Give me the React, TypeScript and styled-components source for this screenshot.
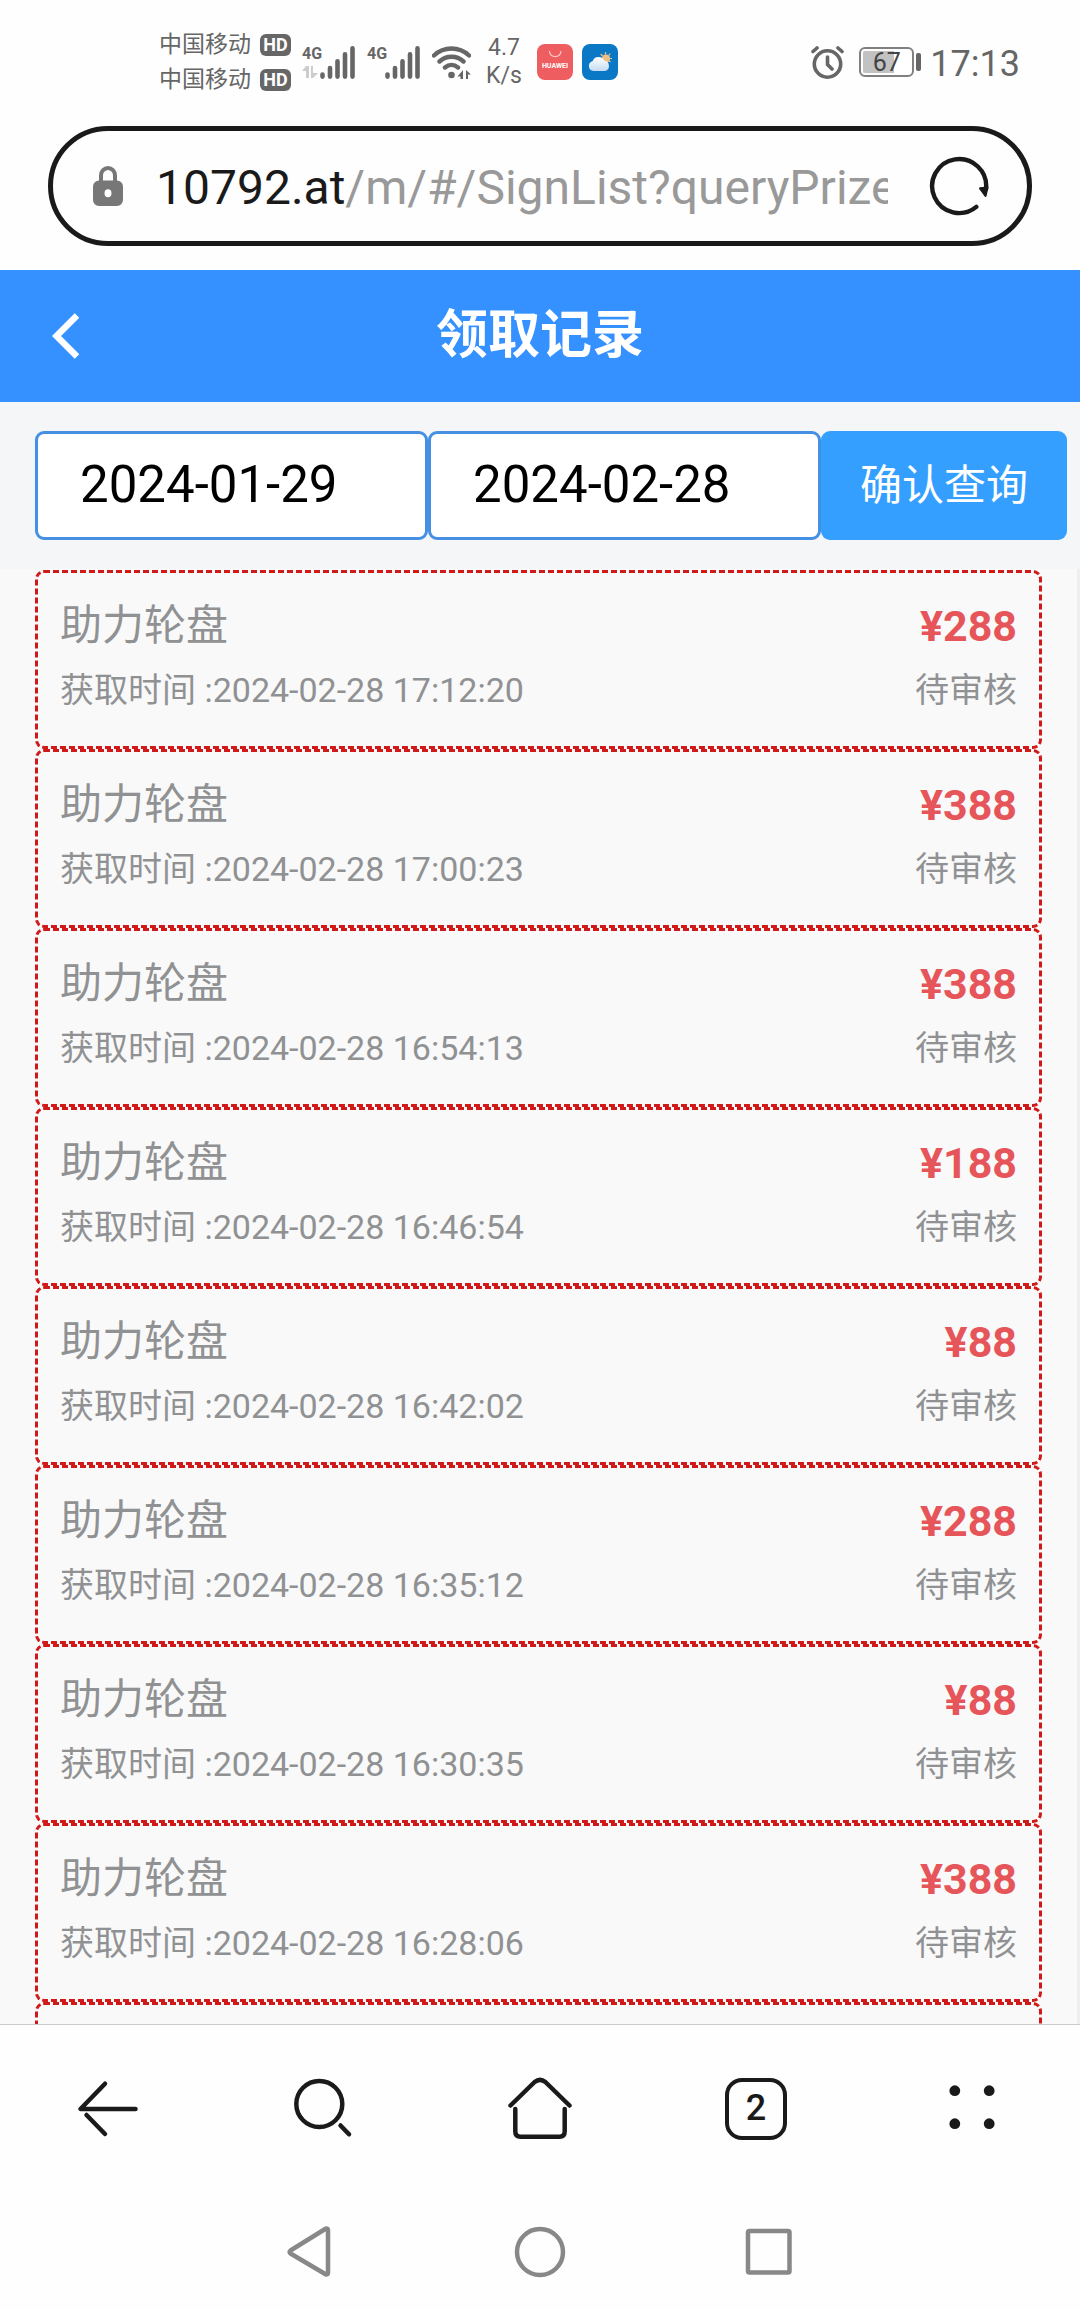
import React, { useState } from "react";
import styled, { createGlobalStyle } from "styled-components";

const ink = "#1a1a1a";
const statusGrey = "#666666";
const muted = "#909193";

const GlobalStyle = createGlobalStyle`
  * { box-sizing: border-box; }
  body {
    margin: 0;
    background: #ffffff;
    font-family: Roboto, "Noto Sans CJK SC", sans-serif;
  }
  button, input {
    font-family: inherit;
    margin: 0;
  }
  button {
    border: 0;
    padding: 0;
    background: none;
    color: inherit;
    cursor: pointer;
  }
  svg { display: block; flex: none; }
`;

const Screen = styled.div`
  display: flex;
  flex-direction: column;
  height: 100vh;
  background: #fefefe;
`;

/* ---------- phone status bar ---------- */

const StatusBar = styled.header`
  display: flex;
  justify-content: space-between;
  align-items: center;
  height: 126px;
  flex: none;
  padding: 0 60px 2px 159px;
  color: ${statusGrey};
`;

const StatusGroup = styled.div`
  display: flex;
  align-items: center;
`;

const Carriers = styled.div`
  display: grid;
  grid-template-columns: 101px 31px;
  grid-auto-rows: 35px;
  align-items: center;
  margin-right: 11px;
  font-size: 23px;
  line-height: 35px;
`;

const HdBadge = styled.span`
  height: 22px;
  border-radius: 6px;
  background: ${statusGrey};
  color: #ffffff;
  font-size: 18px;
  line-height: 22px;
  font-weight: 700;
  text-align: center;
`;

const Signal = styled.div`
  display: flex;
  align-items: flex-end;
  height: 33px;
  margin-right: 12px;
`;

const Network = styled.div`
  display: flex;
  flex-direction: column;
  justify-content: space-between;
  width: 18px;
  height: 33px;
  font-size: 16px;
  line-height: 16px;
  font-weight: 700;
`;

const Speed = styled.div`
  width: 36px;
  margin: 0 15px;
  font-size: 23px;
  line-height: 28px;
  text-align: center;
`;

const AppIcons = styled.div`
  display: flex;
  gap: 9px;
`;

const Battery = styled.div`
  display: flex;
  align-items: center;
  gap: 2px;
  margin: 0 9px 0 15px;
`;

const BatteryBody = styled.div<{ $level: number }>`
  width: 55px;
  height: 30px;
  padding: 2px;
  border: 2px solid #808080;
  border-radius: 6px;
  background: linear-gradient(to right, #c2c2c2 ${(p) => p.$level}%, #ffffff ${(p) => p.$level}%) content-box;
  color: #444444;
  font-size: 25px;
  line-height: 23px;
  text-align: center;
`;

const BatteryTip = styled.div`
  width: 5px;
  height: 18px;
  border-radius: 2px;
  background: ${statusGrey};
`;

const Clock = styled.time`
  padding-top: 3px;
  font-size: 36px;
  line-height: 40px;
`;

/* ---------- browser address bar ---------- */

const AddressBar = styled.div`
  display: flex;
  align-items: center;
  height: 120px;
  flex: none;
  margin: 0 48px 24px;
  padding: 0 38px 0 40px;
  border: 5px solid ${ink};
  border-radius: 60px;
`;

const Address = styled.button`
  flex: 1;
  min-width: 0;
  margin: 0 41px 0 33px;
  padding-top: 4px;
  overflow: hidden;
  color: #999999;
  font-size: 48px;
  line-height: 60px;
  text-align: left;
  white-space: nowrap;
`;

const Host = styled.span`
  color: ${ink};
`;

/* ---------- page ---------- */

const TitleBar = styled.div`
  display: grid;
  grid-template-columns: 132px 1fr 132px;
  align-items: center;
  height: 132px;
  flex: none;
  background: #3591ff;
  color: #ffffff;
`;

const BackButton = styled.button`
  display: grid;
  place-items: center;
  height: 132px;
`;

const Title = styled.h1`
  margin: 0;
  font-size: 52px;
  line-height: 72px;
  font-weight: 700;
  text-align: center;
`;

const Filter = styled.form`
  display: flex;
  flex: none;
  padding: 29px 13px 29px 35px;
  background: #f4f6f8;
`;

const DateInput = styled.input`
  flex: 1;
  min-width: 0;
  height: 109px;
  padding: 0 42px 2px;
  border: 3px solid #4690e4;
  border-radius: 9px;
  background: #ffffff;
  color: #000000;
  font-size: 51px;
  outline: 0;
`;

const QueryButton = styled.button`
  width: 246px;
  height: 109px;
  padding-bottom: 8px;
  border-radius: 9px;
  background: #359fff;
  color: #ffffff;
  font-size: 42px;
`;

const RecordList = styled.ul`
  flex: 1;
  min-height: 0;
  margin: 0;
  padding: 1px 35px 0;
  border-right: 3px solid #eeeeee;
  overflow-y: auto;
  scrollbar-width: none;
  background: #f9f9f9;
  list-style: none;
`;

const Record = styled.li`
  height: 179px;
  padding: 21px 22px 0;
  border: 3px dashed #d01a1a;
  border-radius: 9px;
  color: ${muted};
`;

const Line = styled.div<{ $size: number }>`
  display: flex;
  justify-content: space-between;
  font-size: ${(p) => p.$size}px;
  line-height: 64px;
`;

const Amount = styled.strong`
  color: #e5555a;
  font-size: 43px;
  font-weight: 700;
`;

/* ---------- bottom bars ---------- */

const Toolbar = styled.nav`
  display: grid;
  grid-template-columns: repeat(5, 1fr);
  height: 169px;
  flex: none;
  border-top: 1px solid #cccccc;
  color: ${ink};
`;

const SystemNav = styled.nav`
  display: grid;
  grid-template-columns: repeat(3, 230px);
  justify-content: center;
  height: 117px;
  flex: none;
  color: #888888;
`;

const IconButton = styled.button`
  display: grid;
  place-items: center;
`;

const TabCount = styled.span`
  width: 62px;
  height: 62px;
  border: 4px solid ${ink};
  border-radius: 17px;
  font-size: 36px;
  line-height: 52px;
  font-weight: 500;
  text-align: center;
`;

/* ---------- drawings ---------- */

const SignalBars = () => (
  <svg width="35" height="33" viewBox="0 0 35 33" stroke="currentColor" strokeWidth="4.6" strokeLinecap="round">
    <path d="M2.5 28.6V30.6M10 22V30.6M17.5 15.2V30.6M25 8.4V30.6M32.5 2.4V30.6" />
  </svg>
);

const DataArrows = () => (
  <svg width="16" height="13" viewBox="0 0 16 13" fill="#cccccc">
    <path d="M4 0H7V12H4V5H0ZM9 0H11V7H16L11 12H9Z" />
  </svg>
);

const Wifi = () => (
  <svg width="39" height="33" viewBox="0 0 39 33" fill="none" stroke="currentColor" strokeWidth="4.4" strokeLinecap="round">
    <path d="M2 9.5C12 .2 27 .2 37 9.5M7.5 15.5C14.5 9.2 24.5 9.2 31.5 15.5M13 21.5C17 18.2 22 18.2 26 21.5" />
    <circle cx="19.5" cy="29" r="3.3" fill="currentColor" stroke="none" />
    <path d="M31 24V33H28.5V30.5H25.5ZM34 24L39 28.5H36V33H34Z" fill="currentColor" stroke="none" />
  </svg>
);

const StoreIcon = () => (
  <svg width="36" height="36" viewBox="0 0 36 36">
    <rect width="36" height="36" rx="8" fill="#ee5d60" />
    <path d="M12.5 7.5C13.5 14.2 23 14.2 24 7.5" fill="none" stroke="#f9c4c4" strokeWidth="1.3" strokeLinecap="round" />
    <text x="18" y="23.5" fill="#ffffff" fontSize="7" fontWeight="700" textAnchor="middle">HUAWEI</text>
  </svg>
);

const WeatherIcon = () => (
  <svg width="36" height="36" viewBox="0 0 36 36">
    <defs>
      <linearGradient id="cloud" x1="0" y1="0" x2="0" y2="1">
        <stop offset="0" stopColor="#ffffff" />
        <stop offset="1" stopColor="#c4dcf3" />
      </linearGradient>
    </defs>
    <rect width="36" height="36" rx="8" fill="#0a78c4" />
    <g stroke="#e9c48d" strokeWidth="1.2">
      <path d="M23.5 8V10.5M18.8 10L20.5 12M28.2 9.5L26.8 11.5M30 14.5H28M28.5 18L27 16.8" />
    </g>
    <circle cx="24" cy="14.5" r="4" fill="#f0c083" />
    <path d="M11.5 27A5 5 0 0 1 10.5 17.2A6.5 6.5 0 0 1 22.5 16.8A5.2 5.2 0 0 1 23 27Z" fill="url(#cloud)" />
  </svg>
);

const AlarmIcon = () => (
  <svg width="33" height="33" viewBox="0 0 33 33" fill="none" stroke="currentColor" strokeWidth="3.6" strokeLinecap="round">
    <circle cx="16.5" cy="18" r="13.2" />
    <path d="M16.5 11V18.5L21 23M2 5.5L6 2M31 5.5L27 2" />
  </svg>
);

const LockIcon = () => (
  <svg width="30" height="40" viewBox="0 0 30 40">
    <path d="M8 16V9.5A7 7.5 0 0 1 22 9.5V16" fill="none" stroke="#777777" strokeWidth="4" />
    <path d="M6 14.5H24A6 6 0 0 1 30 20.5V34A6 6 0 0 1 24 40H6A6 6 0 0 1 0 34V20.5A6 6 0 0 1 6 14.5ZM15 23.2A3.5 4 0 0 0 15 31.2A3.5 4 0 0 0 15 23.2Z" fill="#777777" />
  </svg>
);

const RefreshIcon = () => (
  <svg width="60" height="60" viewBox="0 0 60 60" fill="none" stroke={ink} strokeWidth="4.4" strokeLinecap="round">
    <path d="M47.3 50.9A27 27 0 1 1 57 33" />
    <path d="M51 32.3L58.5 31.5L56.5 40Z" fill={ink} strokeWidth="2" strokeLinejoin="round" />
  </svg>
);

const ChevronLeft = () => (
  <svg width="28" height="46" viewBox="0 0 28 46" fill="none" stroke="currentColor" strokeWidth="6.4">
    <path d="M25 2.5L4.5 23L25 43.5" />
  </svg>
);

const BarIcon = ({ children }: { children: React.ReactNode }) => (
  <svg width="64" height="64" viewBox="0 0 64 64" fill="none" stroke="currentColor" strokeWidth="4.5" strokeLinecap="round" strokeLinejoin="round">
    {children}
  </svg>
);

/* ---------- data ---------- */

const records = [
  { time: "2024-02-28 17:12:20", amount: 288 },
  { time: "2024-02-28 17:00:23", amount: 388 },
  { time: "2024-02-28 16:54:13", amount: 388 },
  { time: "2024-02-28 16:46:54", amount: 188 },
  { time: "2024-02-28 16:42:02", amount: 88 },
  { time: "2024-02-28 16:35:12", amount: 288 },
  { time: "2024-02-28 16:30:35", amount: 88 },
  { time: "2024-02-28 16:28:06", amount: 388 },
];

export default function App() {
  const [from, setFrom] = useState("2024-01-29");
  const [to, setTo] = useState("2024-02-28");

  return (
    <Screen>
      <GlobalStyle />
      <StatusBar>
        <StatusGroup>
          <Carriers>
            <span>中国移动</span>
            <HdBadge>HD</HdBadge>
            <span>中国移动</span>
            <HdBadge>HD</HdBadge>
          </Carriers>
          <Signal>
            <Network>
              4G
              <DataArrows />
            </Network>
            <SignalBars />
          </Signal>
          <Signal>
            <Network>4G</Network>
            <SignalBars />
          </Signal>
          <Wifi />
          <Speed>
            4.7
            <br />
            K/s
          </Speed>
          <AppIcons>
            <StoreIcon />
            <WeatherIcon />
          </AppIcons>
        </StatusGroup>
        <StatusGroup>
          <AlarmIcon />
          <Battery>
            <BatteryBody $level={67}>67</BatteryBody>
            <BatteryTip />
          </Battery>
          <Clock>17:13</Clock>
        </StatusGroup>
      </StatusBar>

      <AddressBar>
        <LockIcon />
        <Address type="button">
          <Host>10792.at</Host>/m/#/SignList?queryPrize
        </Address>
        <IconButton type="button" aria-label="刷新">
          <RefreshIcon />
        </IconButton>
      </AddressBar>

      <TitleBar>
        <BackButton type="button" aria-label="返回">
          <ChevronLeft />
        </BackButton>
        <Title>领取记录</Title>
      </TitleBar>

      <Filter onSubmit={(e) => e.preventDefault()}>
        <DateInput aria-label="开始日期" value={from} onChange={(e) => setFrom(e.target.value)} />
        <DateInput aria-label="结束日期" value={to} onChange={(e) => setTo(e.target.value)} />
        <QueryButton type="submit">确认查询</QueryButton>
      </Filter>

      <RecordList>
        {records.map((r) => (
          <Record key={r.time}>
            <Line $size={42}>
              <span>助力轮盘</span>
              <Amount>¥{r.amount}</Amount>
            </Line>
            <Line $size={34}>
              <span>获取时间 :{r.time}</span>
              <span>待审核</span>
            </Line>
          </Record>
        ))}
        <Record aria-hidden="true" />
      </RecordList>

      <Toolbar>
        <IconButton type="button" aria-label="后退">
          <BarIcon>
            <path d="M29 6.7L4.5 32H59.5" />
            <path d="M29 57L10.5 38" />
          </BarIcon>
        </IconButton>
        <IconButton type="button" aria-label="搜索">
          <BarIcon>
            <circle cx="27.3" cy="27" r="23" />
            <path d="M48.5 48.5L57 57.3" />
          </BarIcon>
        </IconButton>
        <IconButton type="button" aria-label="主页">
          <BarIcon>
            <path d="M2.5 28.5L26.6 5Q32 .8 37.4 5L61.5 28.5" />
            <path d="M7.3 32V54.5Q7.3 59.7 12.5 59.7H51.5Q56.7 59.7 56.7 54.5V32" />
          </BarIcon>
        </IconButton>
        <IconButton type="button" aria-label="标签页">
          <TabCount>2</TabCount>
        </IconButton>
        <IconButton type="button" aria-label="菜单">
          <BarIcon>
            <g fill="currentColor" stroke="none">
              <circle cx="14.8" cy="13.7" r="5.4" />
              <circle cx="49.2" cy="13.7" r="5.4" />
              <circle cx="14.8" cy="46.7" r="5.4" />
              <circle cx="49.2" cy="46.7" r="5.4" />
            </g>
          </BarIcon>
        </IconButton>
      </Toolbar>

      <SystemNav>
        <IconButton type="button" aria-label="返回键">
          <BarIcon>
            <path d="M48 8.5L12.5 30.5Q11 32 12.5 33.5L48 54.5Q50 54.5 50 52.5V10.5Q50 8.5 48 8.5Z" />
          </BarIcon>
        </IconButton>
        <IconButton type="button" aria-label="主屏幕键">
          <BarIcon>
            <circle cx="32" cy="32" r="23" />
          </BarIcon>
        </IconButton>
        <IconButton type="button" aria-label="最近任务键">
          <BarIcon>
            <rect x="10" y="11" width="41.5" height="41.5" rx="1.5" />
          </BarIcon>
        </IconButton>
      </SystemNav>
    </Screen>
  );
}
